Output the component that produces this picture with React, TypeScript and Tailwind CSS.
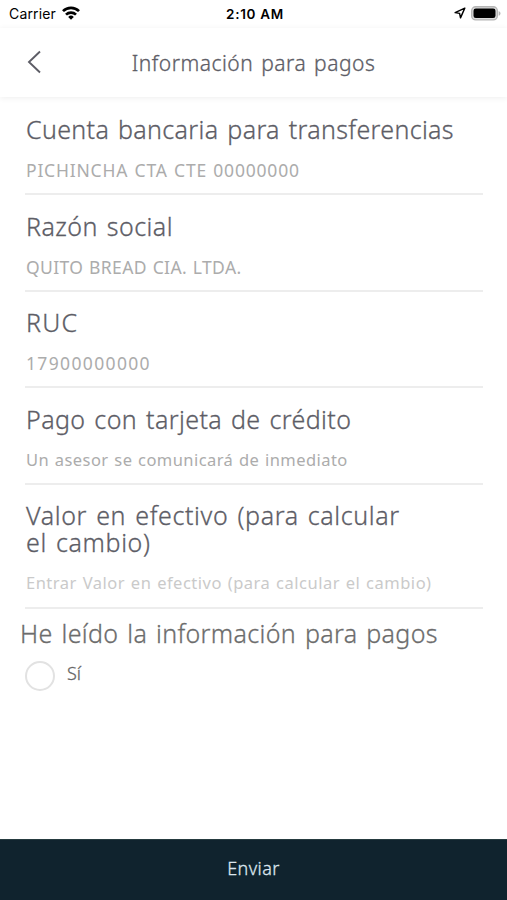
import { clsx } from 'clsx';

const fields = [
  { label: 'Cuenta bancaria para transferencias', value: 'PICHINCHA CTA CTE 00000000', labelCls: 'tracking-[0.35px]', valueCls: 'text-[17.5px] tracking-[0.8px]' },
  { label: 'Razón social', value: 'QUITO BREAD CIA. LTDA.', labelCls: 'tracking-[0.45px]', valueCls: 'text-[17.5px] tracking-[0.35px]' },
  { label: 'RUC', value: '17900000000', labelCls: 'tracking-[1.2px]', valueCls: 'text-[17.5px] tracking-[1.35px]' },
  { label: 'Pago con tarjeta de crédito', value: 'Un asesor se comunicará de inmediato', labelCls: 'tracking-[0.4px]', valueCls: 'text-[16.5px] tracking-[0.43px]' },
];

function StatusBar() {
  return (
    <div className="flex h-7 items-center justify-between pl-[9px] pr-[6px] font-['Inter',sans-serif] text-black">
      <div className="flex w-[160px] items-center gap-[6px]">
        <span className="text-[14px] font-normal leading-7 tracking-[0.15px]">Carrier</span>
        <svg className="-mt-[2px]" width="18" height="14" viewBox="0 0 18 14" fill="none" stroke="currentColor" strokeWidth="2.7">
          <path d="M1 5.1a11.5 11.5 0 0 1 16 0" />
          <path d="M4 8.6a7.2 7.2 0 0 1 10 0" />
          <path d="M9 13.8l-2.8-2.9a4 4 0 0 1 5.6 0z" fill="currentColor" stroke="none" />
        </svg>
      </div>
      <span className="text-[13.5px] font-semibold leading-7 tracking-[0.7px]">2:10 AM</span>
      <div className="-mt-[2px] flex w-[160px] items-center justify-end gap-[5px]">
        <svg width="12" height="12" viewBox="0 0 12 12" fill="none" stroke="currentColor" strokeWidth="1.4" strokeLinejoin="round">
          <path d="M10.8 1.1L1.1 5.6l4.5.8.9 4.5z" />
        </svg>
        <svg width="30" height="15" viewBox="0 0 30 15">
          <rect x="0.7" y="0.7" width="25.6" height="13.2" rx="4" fill="#ddd" stroke="#b5b5b5" strokeWidth="1.4" />
          <rect x="2.5" y="2.5" width="22" height="9.6" rx="2.3" fill="#000" />
          <path d="M27.6 5v4.8c1-.4 1.9-1.3 1.9-2.4s-.9-2-1.9-2.4z" fill="#b5b5b5" />
        </svg>
      </div>
    </div>
  );
}

export default function App() {
  return (
    <div className="flex h-[900px] w-[507px] flex-col overflow-hidden bg-white font-['Noto_Sans','Open_Sans',sans-serif] font-light text-[#5d5d66]">
      <StatusBar />

      {/* Title bar */}
      <header className="grid h-[69px] shrink-0 grid-cols-[60px_1fr_60px] items-center shadow-[0_1px_6px_rgba(0,0,0,0.07)]">
        <svg className="-mt-[2px] ml-[27px]" width="15" height="24" viewBox="0 0 15 24" fill="none" stroke="currentColor" strokeWidth="1.9">
          <path d="M13 1.5L2 12l11 10.5" />
        </svg>
        <h1 className="whitespace-nowrap text-center text-[21px] leading-7 tracking-[0.5px] [-webkit-text-stroke:0.3px] [word-spacing:2px]">Información para pagos</h1>
      </header>

      <main className="flex-1">
        <div className="ml-[25px] mr-[24px]">
          {fields.map(({ label, value, labelCls, valueCls }) => (
            <div key={label} className="h-[96.5px] border-b-2 border-[#ededed] pl-px pt-[17.5px] first:h-[98px] first:pt-[19px]">
              <h2 className={clsx('whitespace-nowrap text-[25px] leading-[27px] [-webkit-text-stroke:0.3px] [word-spacing:2px]', labelCls)}>{label}</h2>
              <p className={clsx('mt-[15px] whitespace-nowrap font-normal leading-[24px] text-[#acacac] [word-spacing:1px]', valueCls)}>{value}</p>
            </div>
          ))}
          <div className="h-[124px] border-b-2 border-[#ededed] pl-px pt-[17.5px]">
            <h2 className="text-[25px] leading-[27px] tracking-[0.63px] [-webkit-text-stroke:0.3px] [word-spacing:2px]">
              Valor en efectivo (para calcular
              <br />
              el cambio)
            </h2>
            <p className="mt-[15px] whitespace-nowrap text-[16.5px] font-normal leading-[24px] tracking-[0.5px] text-[#cacaca] [word-spacing:1px]">
              Entrar Valor en efectivo (para calcular el cambio)
            </p>
          </div>
        </div>

        <h2 className="ml-5 mt-[11px] whitespace-nowrap text-[25px] leading-[27px] tracking-[0.35px] text-[#6c6c6c] [-webkit-text-stroke:0.3px] [word-spacing:2px]">
          He leído la información para pagos
        </h2>
        <label className="ml-[25px] mt-[14px] flex items-center gap-3">
          <span className="h-[30px] w-[30px] rounded-full border-2 border-[#e2e2e2]" />
          <span className="-mt-[6px] text-[18px] leading-6 text-[#666] [-webkit-text-stroke:0.3px]">Sí</span>
        </label>
      </main>

      <button className="h-[61px] shrink-0 border-t border-[#263b40] bg-[#10232e] pb-[3px] text-[18px] tracking-[0.4px] text-[#dce6ee] [-webkit-text-stroke:0.3px]">Enviar</button>
    </div>
  );
}
